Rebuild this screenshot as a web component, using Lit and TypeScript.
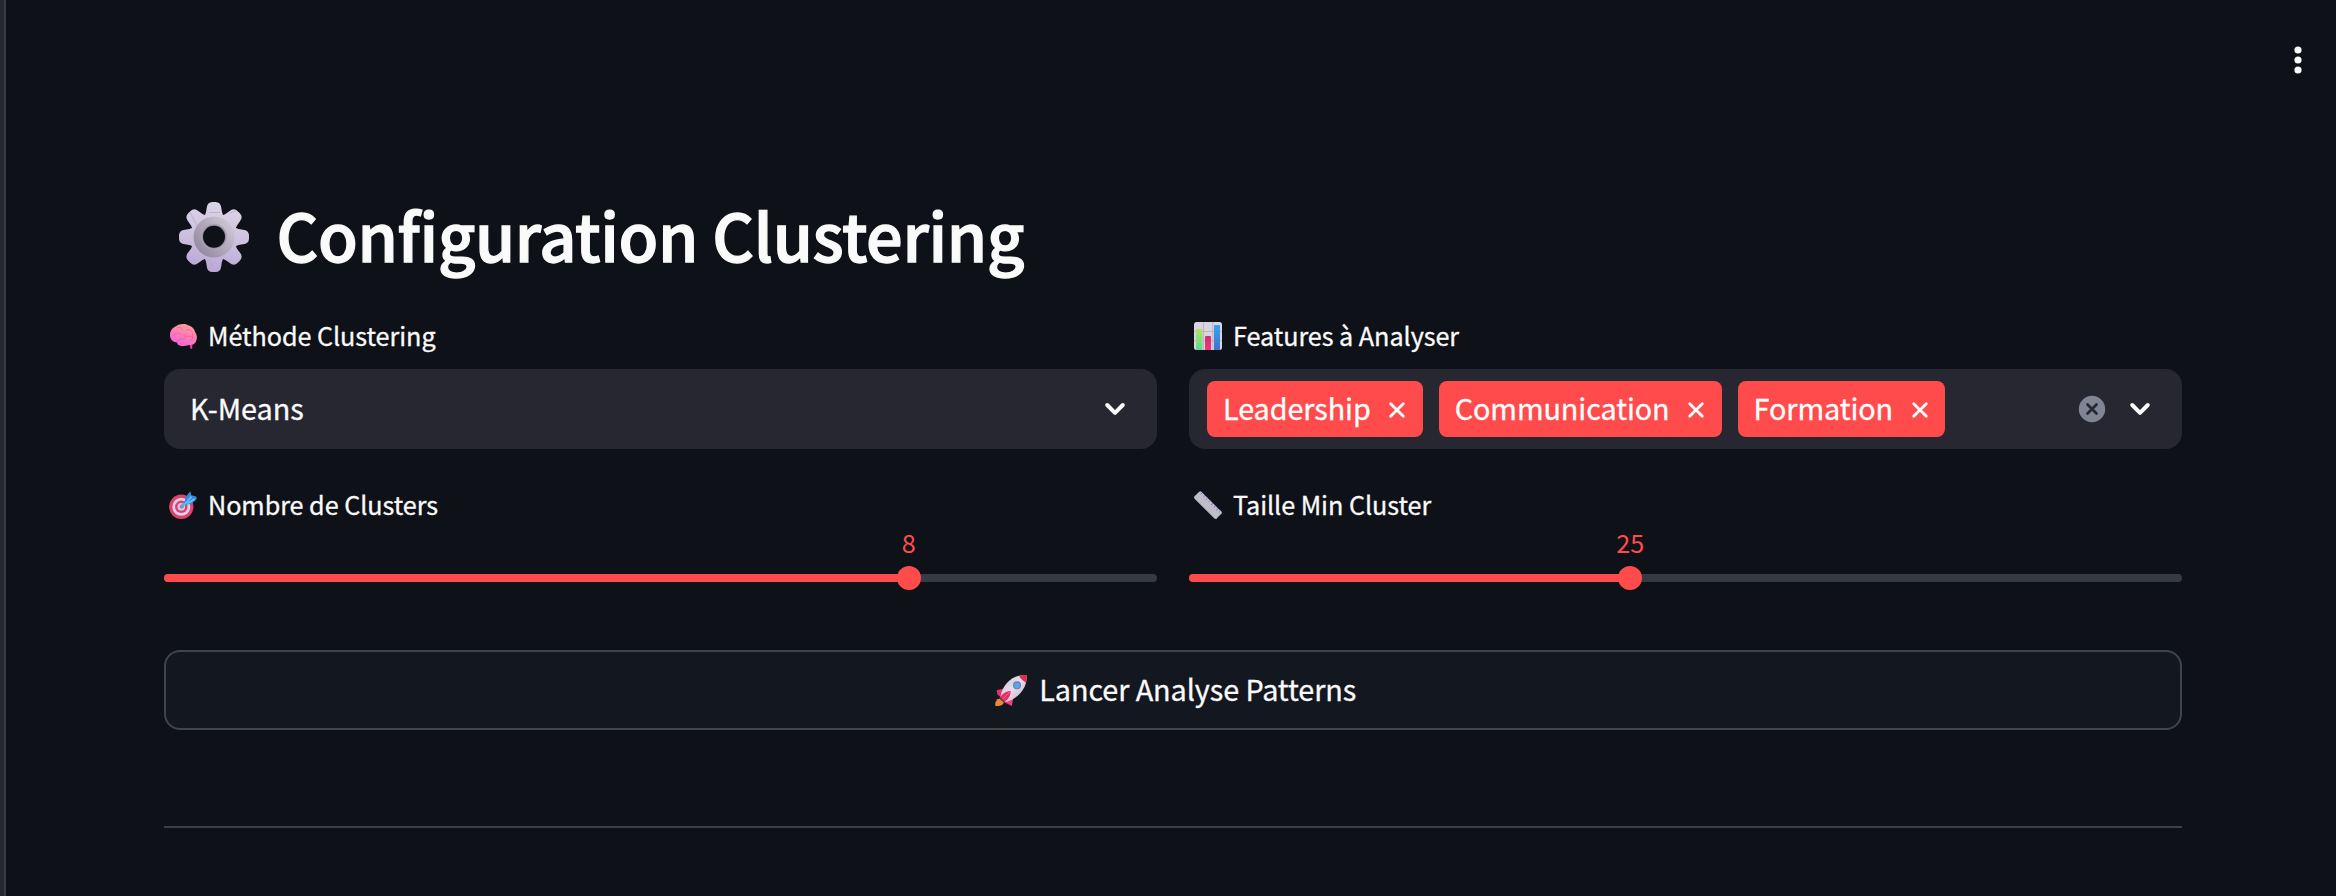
import { LitElement, html, css, svg } from "lit";
import { customElement, property } from "lit/decorators.js";

const gearIcon = html`<svg viewBox="0 0 70 70" width="70" height="70">
  <defs>
    <linearGradient id="gear" x1="0.6" y1="0" x2="0.4" y2="1">
      <stop offset="0" stop-color="#ddd5e8" /><stop offset="0.5" stop-color="#cdc2df" /><stop offset="1" stop-color="#baa5d6" />
    </linearGradient>
    <linearGradient id="ring" x1="0.9" y1="0.1" x2="0.1" y2="0.8">
      <stop offset="0" stop-color="#cfc8d6" /><stop offset="1" stop-color="#958ba2" />
    </linearGradient>
    <mask id="hole"><rect width="70" height="70" fill="#fff" /><circle cx="35" cy="34.7" r="11" fill="#000" /></mask>
  </defs>
  <g mask="url(#hole)">
    <g fill="url(#gear)">
      <path d="${[0, 1, 2, 3, 4, 5, 6, 7].map((i) => {
        const a = (i * Math.PI) / 4;
        const p = (x: number, y: number) =>
          `${(35 + x * Math.cos(a) - y * Math.sin(a)).toFixed(2)} ${(35 + x * Math.sin(a) + y * Math.cos(a)).toFixed(2)}`;
        return `${i ? "L" : "M"}${p(-9.2, -21.5)}Q${p(-7.8, -24)} ${p(-7.3, -29)}Q${p(-6.8, -35)} ${p(-1.5, -35)}L${p(1.5, -35)}Q${p(6.8, -35)} ${p(7.3, -29)}Q${p(7.8, -24)} ${p(9.2, -21.5)}`;
      }).join("")}Z" />
    </g>
    <g stroke="#b3a6c5" stroke-width="0.9" fill="none" opacity="0.8">
      <path d="M11.5 11l6 12M30 10.5h11M51 11l7-2.500M30 57l4.500 11" />
    </g>
    <circle cx="35" cy="35" r="20.500" fill="url(#ring)" />
    <circle cx="35" cy="34.700" r="13" fill="#aca3b6" />
    <circle cx="35" cy="34.700" r="11.800" fill="#938a9e" />
  </g>
</svg>`;

const brainIcon = html`<svg viewBox="0 0 28 28" width="28" height="28">
  <defs><linearGradient id="brain" x1="0.75" y1="0" x2="0.35" y2="1">
    <stop offset="0" stop-color="#ff9d9b" /><stop offset="0.5" stop-color="#ff7fb4" /><stop offset="1" stop-color="#f560dc" />
  </linearGradient></defs>
  <path d="M18.500 22l2.200.500.800 4.500 1.800-.5V21z" fill="#e93a9f" />
  <path d="M1 13.500C.8 8.500 4 5.500 7 4.300 10 1.800 16 1.300 19.500 3.500c3.500.7 6 3.500 6.500 6.500 2 2.500 2.400 6 1.200 8.800-1 3.700-4.500 4.700-7.200 4.200-2.700 1-6 1.300-8.500.700-2.500-.2-3-1.500-3.500-3.200C4.500 20.500 1 17.500 1 13.500z" fill="url(#brain)" />
  <path d="M8 20.500c.5-3 3-3.500 5-3.500 3 0 3.500-2 3.500-4M4 14c2-3 5-3.500 7.500-2M9 5.500c2-.5 4 .5 4.500 2M17 8c2-1 4.500-.5 6 1.500M18 14.500c2-.8 4-.5 5.500 1M23.500 11.500c.8 2 .5 5-1.500 7" fill="none" stroke="#dc4f9b" stroke-width="0.8" stroke-linecap="round" opacity="0.7" />
</svg>`;

const chartIcon = html`<svg viewBox="0 0 28 28" width="28" height="28">
  <defs>
    <linearGradient id="g1" x1="0" y1="0" x2="0" y2="1"><stop offset="0" stop-color="#b5e25c" /><stop offset="1" stop-color="#5bd98e" /></linearGradient>
    <linearGradient id="g2" x1="0" y1="0" x2="0" y2="1"><stop offset="0" stop-color="#cf2f6a" /><stop offset="1" stop-color="#f03478" /></linearGradient>
    <linearGradient id="g3" x1="0" y1="0" x2="0" y2="1"><stop offset="0" stop-color="#37a5ea" /><stop offset="1" stop-color="#3f74cf" /></linearGradient>
  </defs>
  <rect width="28" height="28" rx="2.500" fill="#d9d3e2" />
  <path d="M9.500 0v28M18.800 0v28M0 9.500h28M0 18.700h28" stroke="#b9b1c6" stroke-width="0.9" />
  <path d="M2 8q0-1 1-1h4.500q1 0 1 1v20H2.500Q2 28 2 27z" fill="url(#g1)" />
  <path d="M11 15q0-1 1-1h4q1 0 1 1v13h-6z" fill="url(#g2)" />
  <path d="M20 4q0-1 1-1h4q1 0 1 1v24h-6z" fill="url(#g3)" />
</svg>`;

const targetIcon = html`<svg viewBox="0 0 28 28" width="28" height="28">
  <circle cx="12.300" cy="15.800" r="12.200" fill="#df416f" />
  <circle cx="12.300" cy="15.800" r="9" fill="#d9cfe6" />
  <circle cx="12.300" cy="15.800" r="6.200" fill="#e23f6f" />
  <circle cx="12.300" cy="15.800" r="3.800" fill="#d6c9e0" />
  <circle cx="12.800" cy="15.500" r="2" fill="#8b7f9c" />
  <path d="M13 15L21 7" stroke="#4fb0ea" stroke-width="2.600" stroke-linecap="round" />
  <path d="M15 11.500L17.500 5 21.300.3l1 4 4.900 1.200.6 2.500-5 4.500-6.300 1.500z" fill="#2c8ee0" />
  <path d="M15.500 13.500l7-8M18.500 12.500l7-4.500" stroke="#64c3f4" stroke-width="1.700" />
</svg>`;

const rulerIcon = html`<svg viewBox="0 0 28 28" width="28" height="28">
  <path d="M.5 5.200L5.200.7Q6.300-.3 7.400.7L27.400 20.600Q28.400 21.700 27.400 22.800L22.800 27.300Q21.700 28.300 20.600 27.300L.6 7.400Q-.4 6.300.5 5.200z" fill="#c1bcc9" />
  <path d="M.6 7.400L20.600 27.300Q21.700 28.300 22.800 27.300" fill="none" stroke="#a9a4b2" stroke-width="0.900" />
  <path d="M8.200 1.800L6.800 3.200M11 4.500L9.800 5.700M13.500 7L11.800 8.700M16 9.600L14.800 10.800M18.700 12.300L17 14M21.300 14.900L20.100 16.100M24 17.500L22.300 19.200M26.300 20L25.200 21.100" stroke="#8b63dc" stroke-width="1" />
</svg>`;

const rocketIcon = html`<svg viewBox="0 0 32 31" width="32" height="31">
  <defs><linearGradient id="body" x1="0" y1="0" x2="1" y2="1">
    <stop offset="0" stop-color="#cfc3d8" /><stop offset="0.5" stop-color="#e6dcea" /><stop offset="1" stop-color="#bba9c6" />
  </linearGradient></defs>
  <path d="M.5 31C-.5 28 1 24.500 4.500 23.500l4.500 4C8 30.500 4 31.500.5 31z" fill="#ef8733" />
  <path d="M1.500 15.300L9 13.500 12 18l-6 4.500-3.500-3z" fill="#e5316c" />
  <path d="M16.800 31L18.500 22 12 21l-4 5.500z" fill="#f0407b" />
  <path d="M5.500 21.500C6.500 14 12 5.500 20 2c3.500-1.500 8-2 11.500-1.700C32 4 31.300 8 29.500 12 26 19.500 18 25.500 10.500 27z" fill="url(#body)" />
  <path d="M24 .8C27 0 30 0 31.600.3c.2 2.700-.1 5.200-.6 7.500C29 6.500 25.500 3.800 24 .8z" fill="#df2e50" />
  <circle cx="22" cy="10.300" r="4" fill="#6c7f9f" /><circle cx="22" cy="10.300" r="2.900" fill="#56a5ee" />
  <path d="M5 22.500C7.500 18.500 11 16 15.800 16c0 4-2 8-6 10.800z" fill="#e92e68" />
  <path d="M15.800 16L7 24.800" stroke="#ff6b96" stroke-width="0.900" />
  <path d="M4.800 22.500l4.800 4.800" stroke="#4c4673" stroke-width="1.200" />
</svg>`;

const chevronIcon = html`<svg viewBox="0 0 24 16" width="24" height="16">
  <path d="M4.200 4L12 11.800 19.800 4" fill="none" stroke="#fafafa" stroke-width="4" stroke-linecap="round" stroke-linejoin="round" />
</svg>`;

const crossPath = svg`<path d="M1.700 1.700L14.300 14.300M14.300 1.700L1.700 14.300" stroke="#fff" stroke-width="2.800" stroke-linecap="round" />`;

const clearIcon = html`<svg viewBox="0 0 28 28" width="28" height="28">
  <circle cx="14" cy="14" r="13.200" fill="#808495" />
  <path d="M9.500 9.500L18.500 18.500M18.500 9.500L9.500 18.500" stroke="#262730" stroke-width="2.700" stroke-linecap="round" />
</svg>`;

@customElement("range-slider")
class RangeSlider extends LitElement {
  @property({ type: Number }) value = 0;
  @property({ type: Number }) min = 0;
  @property({ type: Number }) max = 100;

  static styles = css`
    :host { display: block; padding-top: 50px; }
    .track { position: relative; height: 8px; border-radius: 4px; background: #363a42; }
    .fill { height: 8px; border-radius: 4px 0 0 4px; background: #ff4b4b; }
    .thumb {
      position: absolute; top: -8px; width: 24px; height: 24px; margin-left: -12px;
      border-radius: 50%; background: #ff4b4b;
    }
    .value {
      position: absolute; left: 50%; bottom: 30px; transform: translateX(-50%);
      line-height: 36px; color: #ff4b4b;
    }
  `;

  render() {
    const pct = ((this.value - this.min) / (this.max - this.min)) * 100;
    return html`<div class="track">
      <div class="fill" style="width:${pct}%"></div>
      <div class="thumb" style="left:${pct}%"><span class="value">${this.value}</span></div>
    </div>`;
  }
}

@customElement("app-root")
class AppRoot extends LitElement {
  static styles = css`
    :host {
      display: flex; width: 100%; height: 896px; overflow: hidden;
      background: #0e1117; color: #fafafa;
      font-family: "Noto Sans CJK JP", "Noto Sans", sans-serif; font-size: 25.2px;
    }
    svg { display: block; flex: none; }
    .edge { width: 4px; flex: none; background: #262730; border-right: 2px solid #3a3b42; }
    .page { flex: 1; display: flex; flex-direction: column; }
    .toolbar { display: flex; justify-content: flex-end; padding: 44px 32px 0 0; height: 32px; }
    .content { width: 2018px; margin: 115px 0 0 158px; }
    h1 {
      display: flex; align-items: center; margin: 0; height: 86px; padding-left: 14.500px;
      font-size: 64.8px; line-height: 86px; font-weight: 500; letter-spacing: -0.36px;
      -webkit-text-stroke: 1.3px #fafafa; white-space: nowrap;
    }
    h1 svg { margin: 5px 28px 0 0; }
    .grid { display: grid; grid-template-columns: 1fr 1fr; gap: 35px 32px; margin-top: 38px; }
    .label {
      display: flex; align-items: center; gap: 11px; height: 40px; padding-left: 5px;
      line-height: 40px; letter-spacing: -0.05px; -webkit-text-stroke: 0.3px currentColor;
    }
    .label svg { margin-top: 2px; }
    .box {
      box-sizing: border-box; display: flex; align-items: center; height: 80px; margin-top: 14px;
      border-radius: 16px; background: #262730; font-size: 28.8px; padding: 0 30px 0 26px;
    }
    .box.multi { padding-left: 18px; gap: 16px; }
    .text { line-height: 48px; margin-top: -3px; -webkit-text-stroke: 0.3px currentColor; }
    .spacer { flex: 1; }
    .tag {
      display: flex; align-items: center; height: 56px; padding: 0 17.500px 0 16px;
      border-radius: 8px; background: #ff4b4b; color: #fff; letter-spacing: -0.09px;
    }
    .tag svg { margin: 1px 0 0 18.500px; }
    .actions { display: flex; gap: 22px; align-items: center; }
    button {
      box-sizing: border-box; display: flex; align-items: center; justify-content: center;
      width: 100%; height: 80px; margin: 68px 0 0; padding: 0 0 0 5px; border: 2px solid #41444c;
      border-radius: 16px; background: #131720; color: #fafafa;
      font: inherit; font-size: 28.8px; letter-spacing: -0.08px;
    }
    button svg { margin-right: 12.500px; }
    hr { height: 2px; margin: 96px 0 0; border: 0; background: #3c3f44; }
  `;

  private tags = ["Leadership", "Communication", "Formation"];

  render() {
    return html`
      <div class="edge"></div>
      <div class="page">
        <div class="toolbar">
          <svg viewBox="0 0 12 32" width="12" height="32" fill="#fafafa">
            <circle cx="6" cy="6" r="3.600" /><circle cx="6" cy="16" r="3.600" /><circle cx="6" cy="26" r="3.600" />
          </svg>
        </div>
        <div class="content">
          <h1>${gearIcon}<span>Configuration Clustering</span></h1>
          <div class="grid">
            <div>
              <div class="label">${brainIcon}<span>Méthode Clustering</span></div>
              <div class="box"><span class="text">K-Means</span><span class="spacer"></span>${chevronIcon}</div>
            </div>
            <div>
              <div class="label">${chartIcon}<span>Features à Analyser</span></div>
              <div class="box multi">
                ${this.tags.map((t) => html`<div class="tag"><span class="text">${t}</span>
                  <svg viewBox="0 0 16 16" width="16" height="16">${crossPath}</svg></div>`)}
                <span class="spacer"></span>
                <div class="actions">${clearIcon}${chevronIcon}</div>
              </div>
            </div>
            <div>
              <div class="label">${targetIcon}<span>Nombre de Clusters</span></div>
              <range-slider .value=${8} .min=${2} .max=${10}></range-slider>
            </div>
            <div>
              <div class="label">${rulerIcon}<span>Taille Min Cluster</span></div>
              <range-slider .value=${25} .min=${5} .max=${50}></range-slider>
            </div>
          </div>
          <button>${rocketIcon}<span class="text">Lancer Analyse Patterns</span></button>
          <hr />
        </div>
      </div>
    `;
  }
}
